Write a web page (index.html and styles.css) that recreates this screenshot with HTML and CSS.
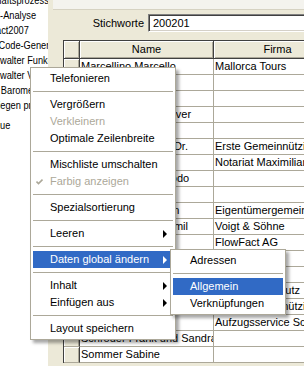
FILE: index.html
```html
<!DOCTYPE html>
<html>
<head>
<meta charset="utf-8">
<link rel="stylesheet" href="styles.css">
</head>
<body>
<div class="app">
  <div class="tree">
    <div class="tree-list">
      <div class="tree-item t0">Geschäftsprozesse</div>
      <div class="tree-item t1">ABC-Analyse</div>
      <div class="tree-item t2">Contact2007</div>
      <div class="tree-item t3">QR-Code-Generator</div>
      <div class="tree-item t4">Hausverwalter Funke</div>
      <div class="tree-item t4">Hausverwalter Vogel</div>
      <div class="tree-item t6">Barometer</div>
      <div class="tree-item t7">Anliegen prüfen</div>
      <div class="tree-item t8">Neue</div>
    </div>
  </div>
  <div class="splitter"></div>
  <div class="main">
    <div class="topbar"></div>
    <div class="search-row">
      <span class="search-label">Stichworte</span>
      <div class="search-input">200201</div>
    </div>
    <div class="grid">
      <div class="row head">
        <div class="sel"></div><div class="cell name">Name</div><div class="cell firma">Firma</div>
      </div>
      <div class="row"><div class="sel"></div><div class="cell">Marcellino Marcello</div><div class="cell">Mallorca Tours</div></div>
      <div class="row"><div class="sel"></div><div class="cell">Becker Anna</div><div class="cell"></div></div>
      <div class="row"><div class="sel"></div><div class="cell">Hansen Peter</div><div class="cell"></div></div>
      <div class="row"><div class="sel"></div><div class="cell">Schwarzenbach Oliver</div><div class="cell"></div></div>
      <div class="row"><div class="sel"></div><div class="cell">Wagner Julia</div><div class="cell"></div></div>
      <div class="row"><div class="sel"></div><div class="cell">Bergmann Markus Dr.</div><div class="cell">Erste Gemeinnützige Wohnungsbau</div></div>
      <div class="row"><div class="sel"></div><div class="cell">Schulze Karl</div><div class="cell">Notariat Maximilian Huber</div></div>
      <div class="row"><div class="sel"></div><div class="cell">Schwarzenberg Frodo</div><div class="cell"></div></div>
      <div class="row"><div class="sel"></div><div class="cell">Klein Susanne</div><div class="cell"></div></div>
      <div class="row"><div class="sel"></div><div class="cell">Brandenburg Stefan</div><div class="cell">Eigentümergemeinschaft</div></div>
      <div class="row"><div class="sel"></div><div class="cell">Voigt-Lindemann Emil</div><div class="cell">Voigt &amp; Söhne</div></div>
      <div class="row"><div class="sel"></div><div class="cell">Richter Paul</div><div class="cell">FlowFact AG</div></div>
      <div class="row"><div class="sel"></div><div class="cell">Neumann Eva</div><div class="cell"></div></div>
      <div class="row"><div class="sel"></div><div class="cell">Krüger Thomas</div><div class="cell"></div></div>
      <div class="row"><div class="sel"></div><div class="cell">Zimmermann Jörg</div><div class="cell">Malerbetrieb Lutz</div></div>
      <div class="row"><div class="sel"></div><div class="cell">Hoffmann Birgit</div><div class="cell">Erste Gemeinnützige Wohnungsbau</div></div>
      <div class="row"><div class="sel"></div><div class="cell">Schmitt Karin</div><div class="cell">Aufzugsservice Schmidt</div></div>
      <div class="row"><div class="sel"></div><div class="cell">Schröder Frank und Sandra</div><div class="cell"></div></div>
      <div class="row"><div class="sel"></div><div class="cell">Sommer Sabine</div><div class="cell"></div></div>
    </div>
  </div>
</div>

<div class="menu main-menu">
  <div class="mi">Telefonieren</div>
  <div class="sep"></div>
  <div class="mi">Vergrößern</div>
  <div class="mi dis">Verkleinern</div>
  <div class="mi">Optimale Zeilenbreite</div>
  <div class="sep"></div>
  <div class="mi">Mischliste umschalten</div>
  <div class="mi dis"><svg class="check" width="7" height="7" viewBox="0 0 7 7"><path d="M0.5 3.5 L2.5 5.5 L6.5 1.5" fill="none" stroke="#aca899" stroke-width="1.6"/></svg>Farbig anzeigen</div>
  <div class="sep"></div>
  <div class="mi">Spezialsortierung</div>
  <div class="sep"></div>
  <div class="mi">Leeren<span class="arrow"></span></div>
  <div class="sep"></div>
  <div class="mi hl">Daten global ändern<span class="arrow"></span></div>
  <div class="sep"></div>
  <div class="mi">Inhalt<span class="arrow"></span></div>
  <div class="mi">Einfügen aus<span class="arrow"></span></div>
  <div class="sep"></div>
  <div class="mi">Layout speichern</div>
</div>

<div class="menu sub-menu">
  <div class="mi">Adressen</div>
  <div class="sep"></div>
  <div class="mi hl">Allgemein</div>
  <div class="mi">Verknüpfungen</div>
</div>
</body>
</html>
```

FILE: styles.css
```css
* { box-sizing: border-box; margin: 0; padding: 0; }
html, body { width: 304px; height: 366px; overflow: hidden; }
body {
  font: 11px "Liberation Sans", Arial, sans-serif;
  color: #000;
  background: #ece9d8;
  position: relative;
}
.app { display: flex; height: 366px; }

/* left tree */
.tree { width: 48px; flex: none; background: #fff; overflow: hidden; }
.tree-list {
  margin-top: -7px;
  width: 80px;
  transform: scaleX(0.84);
  transform-origin: 0 0;
}
.tree-item { height: 15px; line-height: 15px; white-space: nowrap; }
.t0 { margin-left: -30px; }
.t1 { margin-left: -22.5px; }
.t2 { margin-left: -28px; }
.t3 { margin-left: -22px; }
.t4 { margin-left: -41px; }
.t6 { margin-left: 1px; }
.t7 { margin-left: -18px; }
.t8 { margin-left: -14px; margin-top: 5px; }

.splitter { width: 5px; flex: none; background: #ece9d8; }

/* right panel */
.main { flex: 1; min-width: 0; background: #ece9d8; overflow: hidden; }
.topbar { height: 10px; background: #f4f3ee; border-bottom: 1px solid #d6d2c2; }
.search-row { display: flex; align-items: center; margin-top: 4px; gap: 4px; }
.search-label { width: 91px; text-align: right; flex: none; }
.search-input {
  flex: none; width: 170px; height: 18px; line-height: 14px;
  background: #fff; padding-left: 4px; padding-top: 1px;
  border-top: 1px solid #808080; border-left: 1px solid #808080;
  border-bottom: 1px solid #fff; border-right: 1px solid #fff;
  box-shadow: inset 1px 1px 0 #404040, inset -1px -1px 0 #d4d0c8;
}

/* grid */
.grid {
  margin-left: 10px; margin-top: 8px; width: 290px;
  border-left: 1px solid #404040; border-top: 1px solid #404040;
  background: #fff;
}
.row { display: grid; grid-template-columns: 16px 134px 127px; height: 16px; }
.row .sel {
  background: #ece9d8;
  border-right: 1px solid #404040;
  border-bottom: 1px solid #aca899;
  box-shadow: inset 1px 1px 0 #fff, inset -1px 0 0 #aca899;
}
.row .cell {
  border-right: 1px solid #aca899; border-bottom: 1px solid #aca899;
  padding-left: 1px; line-height: 15px; white-space: nowrap; overflow: hidden;
}
.row.head { height: 18px; }
.row.head .sel, .row.head .cell {
  background: #ece9d8;
  border-right: 1px solid #404040; border-bottom: 1px solid #404040;
  box-shadow: inset 1px 1px 0 #fff, inset -1px -1px 0 #aca899;
  line-height: 17px; text-align: center;
}
.row.head .name { padding-left: 0; }

/* menus */
.menu {
  position: absolute; background: #fff;
  border: 1px solid #aca899; padding: 2px;
  box-shadow: 3px 3px 3px rgba(0, 0, 0, 0.35);
}
.main-menu { left: 30px; top: 67px; width: 146px; }
.sub-menu { left: 170px; top: 249px; width: 116px; }
.mi {
  position: relative; height: 17px; line-height: 17px;
  padding-left: 17px; white-space: nowrap;
}
.mi.dis { color: #aca899; }
.mi.hl { background: #316ac5; color: #fff; }
.sep { height: 9px; position: relative; }
.sep::after {
  content: ""; position: absolute; left: 0; right: 0; top: 4px;
  height: 1px; background: #aca899;
}
.arrow {
  position: absolute; right: 6px; top: 5px; width: 0; height: 0;
  border-left: 4px solid #000;
  border-top: 4px solid transparent; border-bottom: 4px solid transparent;
}
.mi.hl .arrow { border-left-color: #fff; }
.check { position: absolute; left: 3px; top: 5px; }
```
